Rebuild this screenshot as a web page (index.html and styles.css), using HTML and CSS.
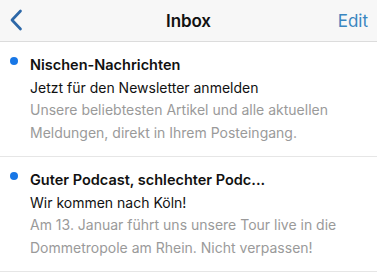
FILE: index.html
```html
<!DOCTYPE html>
<html lang="de">
<head>
<meta charset="utf-8">
<link rel="stylesheet" href="styles.css">
</head>
<body>
<div class="app">
  <header class="navbar">
    <span class="back" aria-label="Zurück">
      <svg width="14" height="22" viewBox="0 0 14 22"><path d="M11.5 2 L3 11 L11.5 20" fill="none" stroke="#2d68a8" stroke-width="2.7" stroke-linecap="round" stroke-linejoin="round"/></svg>
    </span>
    <h1 class="title">Inbox</h1>
    <span class="edit">Edit</span>
  </header>
  <ul class="list">
    <li class="item">
      <span class="dot"></span>
      <div class="content">
        <div class="sender">Nischen-Nachrichten</div>
        <div class="subject">Jetzt für den Newsletter anmelden</div>
        <div class="preview">Unsere beliebtesten Artikel und alle aktuellen Meldungen, direkt in Ihrem Posteingang.</div>
      </div>
    </li>
    <li class="item">
      <span class="dot"></span>
      <div class="content">
        <div class="sender">Guter Podcast, schlechter Podc...</div>
        <div class="subject">Wir kommen nach Köln!</div>
        <div class="preview">Am 13. Januar führt uns unsere Tour live in die Dommetropole am Rhein. Nicht verpassen!</div>
      </div>
    </li>
  </ul>
</div>
</body>
</html>
```
FILE: styles.css
```css
* { box-sizing: border-box; }
html, body { margin: 0; padding: 0; background: #fff; }
body { font-family: Inter, "Noto Sans", sans-serif; -webkit-font-smoothing: antialiased; }
.app { width: 377px; height: 275px; overflow: hidden; }
.navbar {
  height: 42px;
  background: #f7f7f7;
  border-bottom: 1px solid #dcdcdc;
  display: grid;
  grid-template-columns: 1fr auto 1fr;
  align-items: center;
  padding: 0 9px 0 9px;
}
.back { display: flex; align-items: center; justify-self: start; margin-top: -2px; }
.title { margin: 0; font-size: 17px; font-weight: 600; color: #111; letter-spacing: -0.1px; }
.edit { justify-self: end; font-size: 17px; color: #3a86c0; }
.list { list-style: none; margin: 0; padding: 0; }
.item {
  display: flex;
  gap: 12px;
  padding: 12px 10px 12px 10px;
  border-bottom: 1px solid #e6e6e6;
  height: 115px;
}
.dot {
  flex: none;
  width: 8px; height: 8px;
  border-radius: 50%;
  background: #1877e6;
  margin-top: 3px;
}
.content { font-size: 14px; line-height: 22.5px; }
.sender { font-weight: 600; color: #111; font-size: 14.5px; }
.subject { color: #111; }
.preview { color: #9a9a9a; }
```
